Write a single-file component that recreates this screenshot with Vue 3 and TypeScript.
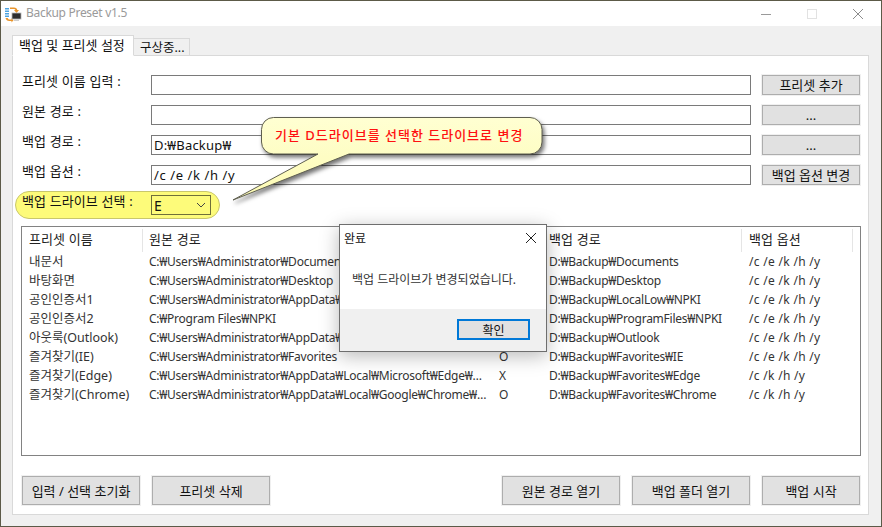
<script setup lang="ts">
interface Row { name: string; src: string; sub: string; dst: string; opt: string }
const rows: Row[] = [
  { name: '내문서', src: 'C:₩Users₩Administrator₩Documents', sub: 'O', dst: 'D:₩Backup₩Documents', opt: '/c /e /k /h /y' },
  { name: '바탕화면', src: 'C:₩Users₩Administrator₩Desktop', sub: 'O', dst: 'D:₩Backup₩Desktop', opt: '/c /e /k /h /y' },
  { name: '공인인증서1', src: 'C:₩Users₩Administrator₩AppData₩LocalLow₩NPKI', sub: 'O', dst: 'D:₩Backup₩LocalLow₩NPKI', opt: '/c /e /k /h /y' },
  { name: '공인인증서2', src: 'C:₩Program Files₩NPKI', sub: 'O', dst: 'D:₩Backup₩ProgramFiles₩NPKI', opt: '/c /e /k /h /y' },
  { name: '아웃룩(Outlook)', src: 'C:₩Users₩Administrator₩AppData₩Local₩Microsoft₩Outlook', sub: 'O', dst: 'D:₩Backup₩Outlook', opt: '/c /e /k /h /y' },
  { name: '즐겨찾기(IE)', src: 'C:₩Users₩Administrator₩Favorites', sub: 'O', dst: 'D:₩Backup₩Favorites₩IE', opt: '/c /e /k /h /y' },
  { name: '즐겨찾기(Edge)', src: 'C:₩Users₩Administrator₩AppData₩Local₩Microsoft₩Edge₩User Data₩Default', sub: 'X', dst: 'D:₩Backup₩Favorites₩Edge', opt: '/c /k /h /y' },
  { name: '즐겨찾기(Chrome)', src: 'C:₩Users₩Administrator₩AppData₩Local₩Google₩Chrome₩User Data₩Default', sub: 'O', dst: 'D:₩Backup₩Favorites₩Chrome', opt: '/c /k /h /y' },
]
</script>

<template>
  <div class="window">
    <header class="titlebar">
      <svg class="appicon" width="18" height="18" viewBox="0 0 18 18">
        <rect x="1" y="3" width="4" height="1.500" fill="#4da3e0" />
        <rect x="1" y="5.500" width="4" height="1.500" fill="#4da3e0" />
        <rect x="1" y="8" width="4" height="1.500" fill="#4da3e0" />
        <rect x="1" y="10.500" width="4" height="1.500" fill="#4da3e0" />
        <path d="M6 2.500h4c2 0 3 1 3.300 2.500H15l-2.500 3-2.500-3h1.500c-.3-.7-.8-1-1.500-1H6z" fill="#e8952c" />
        <path d="M1.500 13h2.200c.3.800.8 1.500 1.800 1.500h2V13l2 2.200-2 2.300v-1.500h-2.200c-2 0-3.300-1-3.800-3z" fill="#e8952c" />
        <rect x="8" y="8" width="9" height="6" fill="#2e2e2e" stroke="#b5b5b5" stroke-width="0.800" />
        <rect x="10" y="14.500" width="5" height="1.500" fill="#cfcfcf" />
      </svg>
      <span class="title">Backup Preset v1.5</span>
      <div class="caption">
        <svg width="12" height="12" viewBox="0 0 12 12"><path d="M1 6.500h10" stroke="#9a9a9a" /></svg>
        <svg width="12" height="12" viewBox="0 0 12 12"><rect x="1.500" y="1.500" width="9" height="9" fill="none" stroke="#e2e2e2" /></svg>
        <svg width="12" height="12" viewBox="0 0 12 12"><path d="M1 1l10 10M11 1L1 11" stroke="#8c8c8c" /></svg>
      </div>
    </header>

    <main class="client">
      <div class="tabs">
        <div class="tab active">백업 및 프리셋 설정</div>
        <div class="tab">구상중...</div>
      </div>
      <section class="panel">
        <div class="form">
          <div class="frow">
            <label>프리셋 이름 입력 :</label>
            <div class="input"></div>
            <button class="btn side">프리셋 추가</button>
          </div>
          <div class="frow">
            <label>원본 경로 :</label>
            <div class="input"></div>
            <button class="btn side">...</button>
          </div>
          <div class="frow">
            <label>백업 경로 :</label>
            <div class="input">D:₩Backup₩</div>
            <button class="btn side">...</button>
          </div>
          <div class="frow">
            <label>백업 옵션 :</label>
            <div class="input spaced">/c /e /k /h /y</div>
            <button class="btn side">백업 옵션 변경</button>
          </div>
          <div class="drive-row">
            <div class="pill">
              <label>백업 드라이브 선택 :</label>
              <div class="select">
                <span>E</span>
                <svg width="10" height="6" viewBox="0 0 10 6"><path d="M1 1l4 4 4-4" fill="none" stroke="#444" /></svg>
              </div>
            </div>
          </div>
        </div>

        <div class="list">
          <div class="lrow lhead">
            <span class="c1">프리셋 이름</span>
            <span class="c2">원본 경로</span>
            <span class="c3"></span>
            <span class="c4">백업 경로</span>
            <span class="c5">백업 옵션</span>
          </div>
          <div v-for="r in rows" :key="r.name" class="lrow body">
            <span class="c1">{{ r.name }}</span>
            <span class="c2">{{ r.src }}</span>
            <span class="c3">{{ r.sub }}</span>
            <span class="c4">{{ r.dst }}</span>
            <span class="c5">{{ r.opt }}</span>
          </div>
        </div>

        <div class="actions">
          <button class="btn act">입력 / 선택 초기화</button>
          <button class="btn act">프리셋 삭제</button>
          <div class="spacer"></div>
          <button class="btn act">원본 경로 열기</button>
          <button class="btn act">백업 폴더 열기</button>
          <button class="btn act last">백업 시작</button>
        </div>
      </section>
    </main>

    <div class="callout">
      <svg class="callout-shape" width="330" height="100" viewBox="0 0 330 100">
        <defs>
          <linearGradient id="cg" x1="0" y1="0" x2="0" y2="1">
            <stop offset="0" stop-color="#ffffd2" />
            <stop offset="1" stop-color="#fdfbb4" />
          </linearGradient>
        </defs>
        <path d="M43.500 1.500H300a12 12 0 0 1 12 12V26a12 12 0 0 1-12 12H119L3 84 88 38H43.500a12 12 0 0 1-12-12V13.500a12 12 0 0 1 12-12z" fill="url(#cg)" stroke="#5f5f50" />
      </svg>
      <span class="callout-text">기본 D드라이브를 선택한 드라이브로 변경</span>
    </div>

    <div class="dialog">
      <div class="dlg-title">
        <span>완료</span>
        <svg width="12" height="12" viewBox="0 0 12 12"><path d="M1 1l10 10M11 1L1 11" stroke="#222" /></svg>
      </div>
      <div class="dlg-body">백업 드라이브가 변경되었습니다.</div>
      <div class="dlg-foot"><button class="dlg-ok">확인</button></div>
    </div>
  </div>
</template>

<style>
html, body { margin: 0; background: #fff; }
</style>

<style scoped>
* { box-sizing: border-box; }
.window {
  position: relative;
  width: 882px;
  height: 527px;
  overflow: hidden;
  display: flex;
  flex-direction: column;
  border: 1px solid #5c5a48;
  font-family: "Noto Sans", "Noto Sans CJK KR", sans-serif;
  font-size: 12px;
  color: #111;
  background: #f0f0f0;
}
.titlebar {
  height: 25px;
  flex: none;
  background: #fff;
  display: flex;
  align-items: center;
  padding-left: 3px;
}
.appicon { flex: none; }
.title { margin: -2px 0 0 4px; color: #9a9a9a; font-size: 12px; letter-spacing: -0.3px; }
.caption {
  margin-left: auto;
  display: flex;
  align-items: center;
  gap: 34px;
  padding-right: 17px;
}
.client { flex: 1; padding: 10px 12px 11px 11px; display: flex; flex-direction: column; min-height: 0; }
.tabs { display: flex; align-items: flex-end; height: 20px; flex: none; margin-bottom: -1px; position: relative; z-index: 1; }
.tab {
  height: 18px;
  width: 56px;
  padding-left: 6px;
  line-height: 17px;
  font-size: 12.5px;
  background: #f0f0f0;
  border: 1px solid #d9d9d9;
  border-left-width: 0;
  white-space: nowrap;
}
.tab.active {
  height: 21px;
  width: 122px;
  padding-left: 6px;
  line-height: 18px;
  font-size: 13px;
  background: #fff;
  border-left-width: 1px;
  border-bottom-color: #fff;
}
.panel {
  flex: 1;
  background: #fff;
  border: 1px solid #d9d9d9;
  padding: 19px 7px 8px 9px;
  display: flex;
  flex-direction: column;
  min-height: 0;
}
.form { display: flex; flex-direction: column; gap: 10px; flex: none; }
.frow { display: flex; align-items: center; height: 20px; }
.frow label, .pill label {
  width: 129px;
  flex: none;
  margin-top: -10px;
  white-space: nowrap;
  font-size: 13px;
  word-spacing: 0.500px;
}
.input {
  width: 600px;
  height: 20px;
  border: 1px solid #7a7a7a;
  background: #fff;
  padding-left: 2px;
  line-height: 18px;
  flex: none;
  white-space: nowrap;
  font-size: 13px;
  letter-spacing: 0.200px;
}
.input.spaced { letter-spacing: 0.600px; }
.btn {
  font: inherit;
  font-size: 13px;
  color: #111;
  background: #e1e1e1;
  border: 1px solid #adadad;
  outline: 1px solid #f0f0f0;
  padding: 0;
  white-space: nowrap;
}
.side { width: 98px; height: 20px; margin-left: 11px; flex: none; line-height: 16px; }
.drive-row { height: 28px; margin: -4px 0 0 -7px; }
.pill {
  width: 205px;
  height: 28px;
  background: #fdfb7a;
  border: 1px solid #c9c76c;
  border-radius: 14px;
  display: flex;
  align-items: center;
  padding-left: 6px;
}
.select {
  width: 60px;
  height: 20px;
  border: 1px solid #6f6f3a;
  display: flex;
  align-items: center;
  justify-content: space-between;
  padding: 0 4px 0 2px;
  font-size: 14px;
}
.list {
  margin: 7px 0 0 -1px;
  height: 230px;
  flex: none;
  border: 1px solid #828282;
  background: #fff;
  padding-top: 2px;
}
.lrow {
  display: grid;
  grid-template-columns: 121px 349px 50px 200px 111px;
  height: 19px;
  line-height: 19px;
  color: #333;
}
.lrow > span { padding-left: 7px; white-space: nowrap; overflow: hidden; text-overflow: ellipsis; }
.lrow > .c2 { padding-left: 6px; padding-right: 5px; }
.body .c1 { font-size: 12.500px; }
.body .c2, .body .c4 { letter-spacing: -0.250px; }
.body .c5 { letter-spacing: 0.300px; }
.lhead { height: 23px; line-height: 20px; }
.lhead > span { border-right: 1px solid #e5e5e5; height: 23px; color: #222; font-size: 13px; word-spacing: 0.500px; }
.lhead .c2, .lhead .c3 { border-right: 0; }
.actions { display: flex; gap: 12px; margin: 20px 1px 0 0; flex: none; }
.act { width: 118px; height: 29px; }
.act.last { width: 98px; }
.spacer { flex: 1; }

.callout { position: absolute; left: 229px; top: 115px; width: 330px; height: 100px; }
.callout-shape { position: absolute; left: 0; top: 0; filter: drop-shadow(2px 3px 2px rgba(0,0,0,0.55)); }
.callout-text {
  position: absolute;
  left: 45px;
  top: 9px;
  color: #ff1010;
  font-weight: 500;
  font-size: 13px;
  letter-spacing: 1px;
  white-space: nowrap;
}
.dialog {
  position: absolute;
  left: 338px;
  top: 223px;
  width: 208px;
  height: 128px;
  background: #fff;
  border: 1px solid #6e6e6e;
  box-shadow: 0 4px 18px rgba(0,0,0,0.28);
  display: flex;
  flex-direction: column;
}
.dlg-title { height: 26px; display: flex; align-items: center; justify-content: space-between; padding: 0 9px 0 4px; flex: none; color: #111; }
.dlg-body { height: 58px; padding: 19px 0 0 12px; color: #333; font-size: 12px; flex: none; }
.dlg-foot { flex: 1; background: #f0f0f0; display: flex; justify-content: flex-end; align-items: flex-start; padding: 10px 16px 0 0; }
.dlg-ok { width: 73px; height: 21px; background: #e1e1e1; border: 2px solid #0078d7; font: inherit; color: #111; padding: 0; }
</style>
